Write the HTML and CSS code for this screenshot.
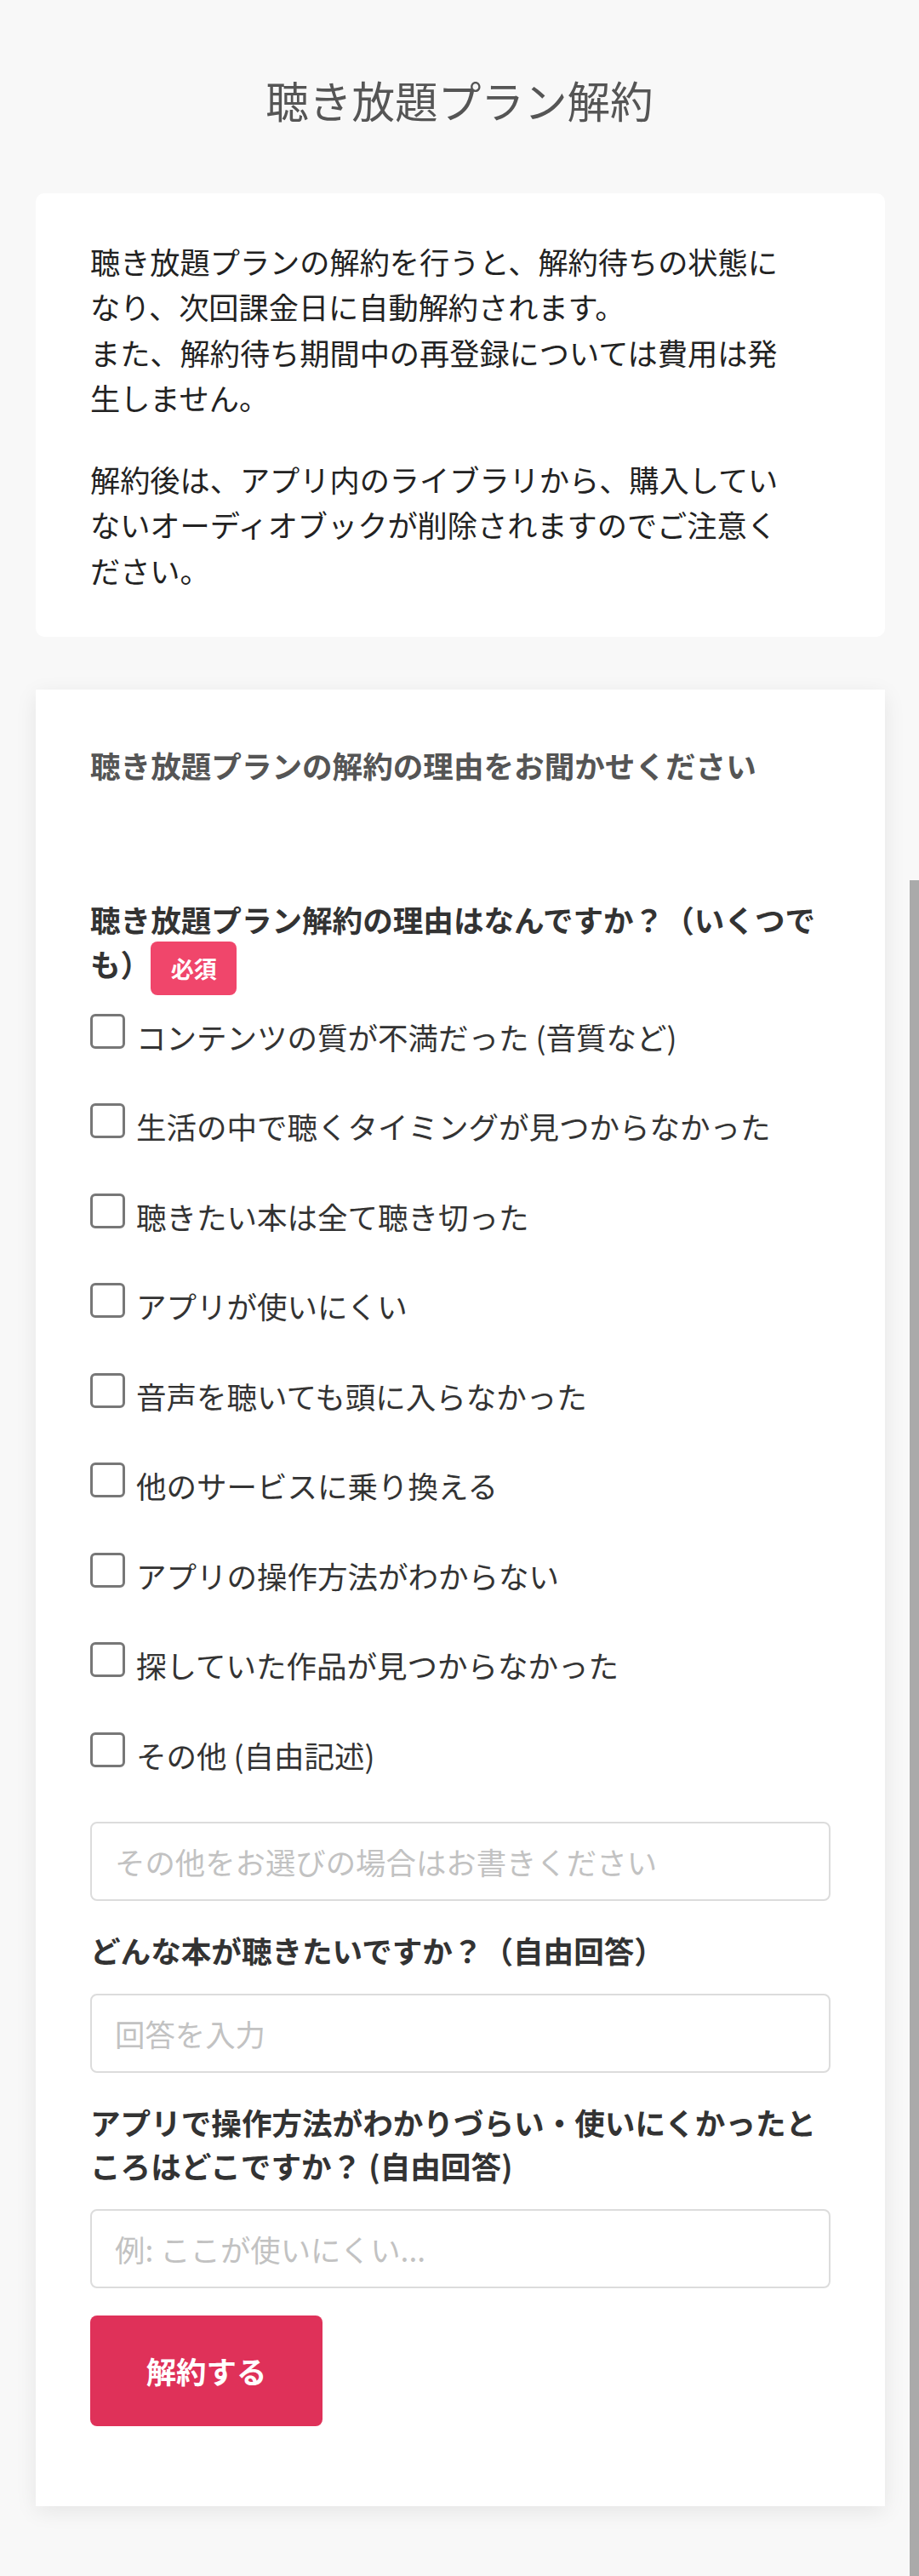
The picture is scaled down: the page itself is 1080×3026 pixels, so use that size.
FILE: index.html
```html
<!DOCTYPE html>
<html lang="ja">
<head>
<meta charset="utf-8">
<title>聴き放題プラン解約</title>
<link rel="stylesheet" href="styles.css">
</head>
<body>
<header class="page-header">
  <h1 class="page-title">聴き放題プラン解約</h1>
</header>

<section class="card notice">
  <p>聴き放題プランの解約を行うと、解約待ちの状態になり、次回課金日に自動解約されます。<br>また、解約待ち期間中の再登録については費用は発生しません。</p>
  <p>解約後は、アプリ内のライブラリから、購入していないオーディオブックが削除されますのでご注意ください。</p>
</section>

<section class="card survey">
  <h2 class="survey-title">聴き放題プランの解約の理由をお聞かせください</h2>
  <form class="survey-form">
    <p class="q-label q-first">聴き放題プラン解約の理由はなんですか？（いくつでも）<span class="badge">必須</span></p>
    <label class="option"><input type="checkbox" class="check"><span>コンテンツの質が不満だった (音質など)</span></label>
    <label class="option"><input type="checkbox" class="check"><span>生活の中で聴くタイミングが見つからなかった</span></label>
    <label class="option"><input type="checkbox" class="check"><span>聴きたい本は全て聴き切った</span></label>
    <label class="option"><input type="checkbox" class="check"><span>アプリが使いにくい</span></label>
    <label class="option"><input type="checkbox" class="check"><span>音声を聴いても頭に入らなかった</span></label>
    <label class="option"><input type="checkbox" class="check"><span>他のサービスに乗り換える</span></label>
    <label class="option"><input type="checkbox" class="check"><span>アプリの操作方法がわからない</span></label>
    <label class="option"><input type="checkbox" class="check"><span>探していた作品が見つからなかった</span></label>
    <label class="option"><input type="checkbox" class="check"><span>その他 (自由記述)</span></label>
    <input type="text" class="text-input" placeholder="その他をお選びの場合はお書きください">

    <p class="q-label">どんな本が聴きたいですか？（自由回答）</p>
    <input type="text" class="text-input" placeholder="回答を入力">

    <p class="q-label">アプリで操作方法がわかりづらい・使いにくかったところはどこですか？ (自由回答)</p>
    <input type="text" class="text-input" placeholder="例: ここが使いにくい...">

    <button type="button" class="submit">解約する</button>
  </form>
</section>

<div class="scrollbar"></div>
</body>
</html>
```

FILE: styles.css
```css
* {
  box-sizing: border-box;
}

html, body {
  margin: 0;
  padding: 0;
}

body {
  position: relative;
  background: #f8f8f8;
  font-family: "Noto Sans CJK JP", "Noto Sans", sans-serif;
  font-size: 35.2px;
  color: #222;
  padding-bottom: 81px;
  min-height: 3026px;
  overflow: hidden;
}

.page-header {
  padding: 80px 0 72px;
}

.page-title {
  margin: 0;
  text-align: center;
  font-size: 50.6px;
  line-height: 75px;
  font-weight: 400;
  color: #555;
}

.card {
  background: #fff;
  margin-left: 42px;
  width: 998px;
}

.notice {
  border-radius: 10px;
  padding: 53px 104px 52px 64px;
}

.notice p {
  margin: 0;
  font-size: 35.2px;
  line-height: 53.3px;
  color: #222;
}

.notice p + p {
  margin-top: 43px;
}

.survey {
  margin-top: 62px;
  padding: 62px 64px 94px 64px;
  box-shadow: 0 6px 24px rgba(0, 0, 0, 0.08);
}

.survey-title {
  margin: 0 0 129px;
  font-size: 35.6px;
  line-height: 53px;
  font-weight: 700;
  color: #555;
}

.survey-form {
  display: block;
}

.q-label {
  margin: 32px 0 25px;
  font-size: 35.6px;
  line-height: 51.5px;
  font-weight: 700;
  color: #333;
}

.q-first {
  margin: 0 0 22px;
}

.badge {
  display: inline-block;
  vertical-align: middle;
  width: 101px;
  height: 63px;
  line-height: 63px;
  text-align: center;
  border-radius: 8px;
  background: #f0466b;
  color: #fff;
  font-size: 27px;
  font-weight: 700;
}

.option {
  display: flex;
  align-items: flex-start;
  height: 53px;
  line-height: 53px;
  margin-bottom: 52.5px;
  font-size: 35.5px;
  color: #333;
}

.check {
  appearance: none;
  -webkit-appearance: none;
  flex: none;
  width: 41px;
  height: 41px;
  margin: 0 13px 0 0;
  border: 3px solid #777;
  border-radius: 6px;
  background: #fff;
}

.text-input {
  display: block;
  width: 870px;
  height: 93px;
  margin: 0;
  padding: 0 27px;
  border: 2px solid #dcdcdc;
  border-radius: 8px;
  background: #fff;
  font-family: "Noto Sans CJK JP", "Noto Sans", sans-serif;
  font-size: 35.4px;
  color: #333;
  outline: none;
}

.text-input::placeholder {
  color: #c2c2c2;
}

.submit {
  display: block;
  margin-top: 32px;
  width: 273px;
  height: 130px;
  border: none;
  border-radius: 8px;
  background: #df3159;
  color: #fff;
  font-family: "Noto Sans CJK JP", "Noto Sans", sans-serif;
  font-size: 35.4px;
  font-weight: 700;
  padding: 0;
}

.scrollbar {
  position: absolute;
  top: 1034px;
  right: 0;
  width: 11px;
  height: 1992px;
  background: #aaa;
}
```
